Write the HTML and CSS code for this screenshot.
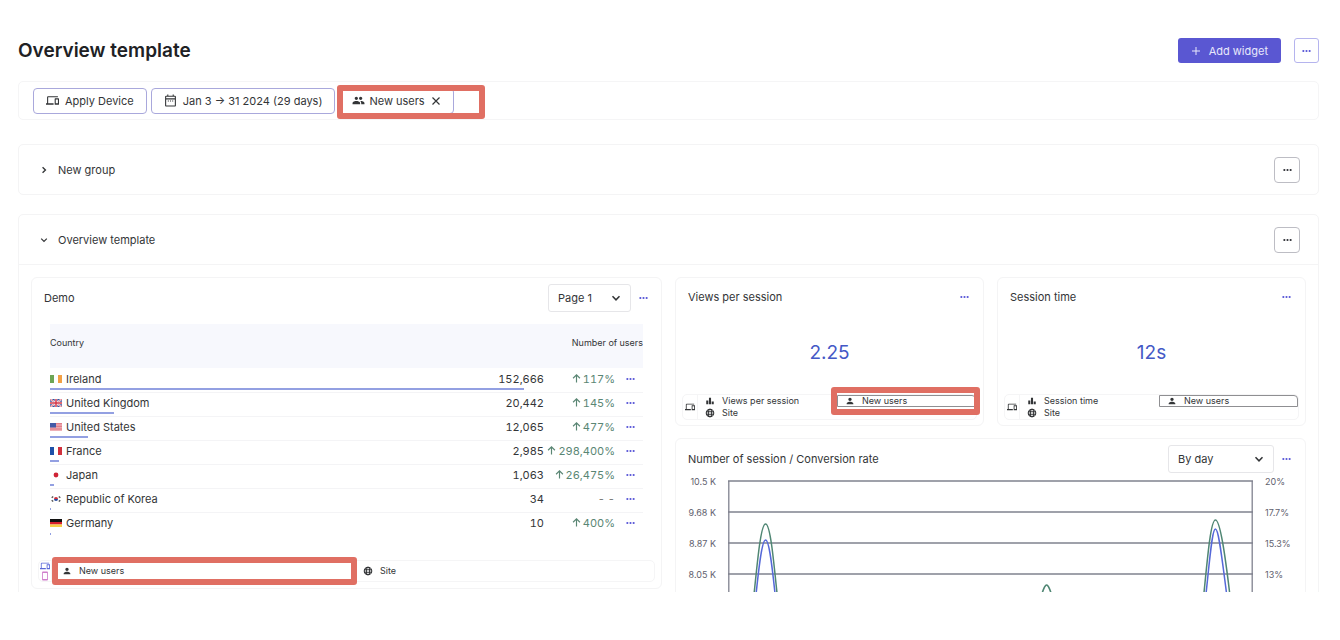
FILE: index.html
```html
<!DOCTYPE html>
<html lang="en">
<head>
<meta charset="utf-8">
<title>Overview template</title>
<link rel="stylesheet" href="styles.css">
</head>
<body>
<svg class="defs" aria-hidden="true">
  <symbol id="dots" viewBox="0 0 10 4"><circle cx="1.5" cy="2" r="1.2"/><circle cx="5" cy="2" r="1.2"/><circle cx="8.5" cy="2" r="1.2"/></symbol>
  <symbol id="device" viewBox="0 0 24 24"><path d="M4 6h18V4H4c-1.100 0-2 .9-2 2v11H0v3h14v-3H4zm19 2h-6c-.55 0-1 .45-1 1v10c0 .55.45 1 1 1h6c.55 0 1-.45 1-1V9c0-.55-.45-1-1-1m-1 9h-4v-7h4z"/></symbol>
  <symbol id="phone" viewBox="0 0 24 24"><path d="M17 1H7a2 2 0 0 0-2 2v18a2 2 0 0 0 2 2h10a2 2 0 0 0 2-2V3a2 2 0 0 0-2-2m0 18H7V5h10z"/></symbol>
  <symbol id="person" viewBox="0 0 24 24"><path d="M12 12c2.200 0 4-1.800 4-4s-1.800-4-4-4-4 1.800-4 4 1.800 4 4 4m0 2c-2.700 0-8 1.300-8 4v2h16v-2c0-2.700-5.300-4-8-4"/></symbol>
  <symbol id="people" viewBox="0 0 24 24"><path d="M16 11c1.660 0 2.990-1.340 2.990-3S17.660 5 16 5s-3 1.340-3 3 1.340 3 3 3m-8 0c1.660 0 2.990-1.340 2.990-3S9.660 5 8 5 5 6.340 5 8s1.340 3 3 3m0 2c-2.330 0-7 1.170-7 3.500V19h14v-2.500C15 14.170 10.330 13 8 13m8 0c-.29 0-.62.02-.97.05C16.190 13.890 17 15.020 17 16.500V19h6v-2.500c0-2.330-4.670-3.500-7-3.500"/></symbol>
  <symbol id="bars" viewBox="0 0 24 24"><path d="M3 11h5v9H3zM9.500 4h5v16h-5zM16 13h5v7h-5z"/></symbol>
  <symbol id="globe" viewBox="0 0 24 24"><g fill="none" stroke="currentColor" stroke-width="2.600"><circle cx="12" cy="12" r="9"/><ellipse cx="12" cy="12" rx="4" ry="9"/><path d="M3 9h18M3 15h18"/></g></symbol>
  <symbol id="calendar" viewBox="0 0 24 24"><path d="M20 3h-2V1h-2v2H8V1H6v2H4a2 2 0 0 0-2 2v16c0 1.100.9 2 2 2h16c1.100 0 2-.9 2-2V5a2 2 0 0 0-2-2m0 18H4V10h16zm0-13H4V5h16zM7 12h2v2H7zm4 0h2v2h-2zm4 0h2v2h-2z"/></symbol>
  <symbol id="down" viewBox="0 0 10 10"><path d="M1.500 3.200 5 6.800l3.500-3.600" fill="none" stroke="currentColor" stroke-width="1.500"/></symbol>
  <symbol id="right" viewBox="0 0 10 10"><path d="M3.200 1.500 6.800 5 3.200 8.500" fill="none" stroke="currentColor" stroke-width="1.700"/></symbol>
  <symbol id="up" viewBox="0 0 10 10"><path d="M5 9.500V1M1.200 4.700 5 1l3.800 3.700" fill="none" stroke="currentColor" stroke-width="1.300"/></symbol>
</svg>

<div class="page">
  <header class="page-head">
    <h1 class="title">Overview template</h1>
    <button class="add" type="button"><svg class="plus" viewBox="0 0 10 10"><path d="M5 1v8M1 5h8" stroke="currentColor" stroke-width="1"/></svg>Add widget</button>
    <button class="square accent" type="button" aria-label="Page options"><svg class="dots"><use href="#dots"/></svg></button>
  </header>

  <div class="filters">
    <button class="filter" type="button"><svg class="icon"><use href="#device"/></svg>Apply Device</button>
    <button class="filter" type="button"><svg class="icon"><use href="#calendar"/></svg>Jan 3 → 31 2024 (29 days)</button>
    <div class="marked">
      <button class="filter users" type="button"><svg class="icon"><use href="#people"/></svg>New users<svg class="close" viewBox="0 0 10 10"><path d="M1.500 1.500l7 7M8.500 1.500l-7 7" stroke="currentColor" stroke-width="1.200"/></svg></button>
      <span class="mark mark-filter"></span>
    </div>
  </div>

  <section class="group">
    <div class="group-head">
      <button class="toggle" type="button"><svg class="chev"><use href="#right"/></svg>New group</button>
      <button class="square" type="button" aria-label="Group options"><svg class="dots"><use href="#dots"/></svg></button>
    </div>
  </section>

  <section class="group">
    <div class="group-head">
      <button class="toggle" type="button"><svg class="chev"><use href="#down"/></svg>Overview template</button>
      <button class="square" type="button" aria-label="Group options"><svg class="dots"><use href="#dots"/></svg></button>
    </div>
    <div class="board">
      <article class="card demo">
        <div class="demo-head">
          <h2 class="card-title">Demo</h2>
          <div class="select-box page-select"><select class="select" aria-label="Page"><option>Page 1</option></select><svg class="select-chev"><use href="#down"/></svg></div>
          <button class="more" type="button" aria-label="Widget options"><svg class="dots"><use href="#dots"/></svg></button>
        </div>
        <table class="table">
          <colgroup><col><col class="col-count"><col class="col-change"><col class="col-more"></colgroup>
          <thead><tr><th>Country</th><th class="num" colspan="3">Number of users</th></tr></thead>
          <tbody>
            <tr><td><span class="country"><svg class="flag" viewBox="0 0 12 8"><path fill="#fff" d="M0 0h12v8H0z"/><path fill="#6da555" d="M0 0h4v8H0z"/><path fill="#f2a045" d="M8 0h4v8H8z"/></svg>Ireland</span><span class="bar" style="width:80%"></span></td><td class="num">152,666</td><td class="change"><svg class="up"><use href="#up"/></svg>117%</td><td class="opt"><button class="more" type="button" aria-label="Ireland options"><svg class="dots"><use href="#dots"/></svg></button></td></tr>
            <tr><td><span class="country"><svg class="flag" viewBox="0 0 12 8"><path fill="#39539c" d="M0 0h12v8H0z"/><path stroke="#fff" stroke-width="1.800" d="M0 0l12 8M12 0L0 8"/><path stroke="#d2384a" stroke-width=".7" d="M0 0l12 8M12 0L0 8"/><path stroke="#fff" stroke-width="2.600" d="M6 0v8M0 4h12"/><path stroke="#d2384a" stroke-width="1.500" d="M6 0v8M0 4h12"/></svg>United Kingdom</span><span class="bar" style="width:10.8%"></span></td><td class="num">20,442</td><td class="change"><svg class="up"><use href="#up"/></svg>145%</td><td class="opt"><button class="more" type="button" aria-label="United Kingdom options"><svg class="dots"><use href="#dots"/></svg></button></td></tr>
            <tr><td><span class="country"><svg class="flag" viewBox="0 0 12 8"><path fill="#f5c9ce" d="M0 0h12v8H0z"/><path stroke="#d9626f" stroke-width=".8" d="M0 .4h12M0 2h12M0 3.600h12M0 5.200h12M0 6.800h12"/><path fill="#4459a6" d="M0 0h6v4.500H0z"/></svg>United States</span><span class="bar" style="width:6.4%"></span></td><td class="num">12,065</td><td class="change"><svg class="up"><use href="#up"/></svg>477%</td><td class="opt"><button class="more" type="button" aria-label="United States options"><svg class="dots"><use href="#dots"/></svg></button></td></tr>
            <tr><td><span class="country"><svg class="flag" viewBox="0 0 12 8"><path fill="#fff" d="M0 0h12v8H0z"/><path fill="#1e50a8" d="M0 0h4v8H0z"/><path fill="#d0303c" d="M8 0h4v8H8z"/></svg>France</span><span class="bar" style="width:1.6%"></span></td><td class="num">2,985</td><td class="change"><svg class="up"><use href="#up"/></svg>298,400%</td><td class="opt"><button class="more" type="button" aria-label="France options"><svg class="dots"><use href="#dots"/></svg></button></td></tr>
            <tr><td><span class="country"><svg class="flag" viewBox="0 0 12 8"><path fill="#fff" d="M0 0h12v8H0z"/><circle cx="6" cy="4" r="2.400" fill="#cf2436"/></svg>Japan</span><span class="bar" style="width:0.6%"></span></td><td class="num">1,063</td><td class="change"><svg class="up"><use href="#up"/></svg>26,475%</td><td class="opt"><button class="more" type="button" aria-label="Japan options"><svg class="dots"><use href="#dots"/></svg></button></td></tr>
            <tr><td><span class="country"><svg class="flag" viewBox="0 0 12 8"><path fill="#fff" d="M0 0h12v8H0z"/><path fill="#d0303c" d="M4 4a2 2 0 0 1 4 0z"/><path fill="#2449a0" d="M4 4a2 2 0 0 0 4 0z"/><path stroke="#555" stroke-width="1.400" d="M1.700 2.800l1.500-1.300M10.300 2.800L8.800 1.500M1.700 5.200l1.500 1.300M10.300 5.200L8.800 6.500"/></svg>Republic of Korea</span><span class="bar" style="width:0.2%"></span></td><td class="num">34</td><td class="change none">- -</td><td class="opt"><button class="more" type="button" aria-label="Republic of Korea options"><svg class="dots"><use href="#dots"/></svg></button></td></tr>
            <tr><td><span class="country"><svg class="flag" viewBox="0 0 12 8"><path fill="#111" d="M0 0h12v3H0z"/><path fill="#d8202c" d="M0 3h12v2.500H0z"/><path fill="#f8cf46" d="M0 5.500h12V8H0z"/></svg>Germany</span><span class="bar" style="width:0.2%"></span></td><td class="num">10</td><td class="change"><svg class="up"><use href="#up"/></svg>400%</td><td class="opt"><button class="more" type="button" aria-label="Germany options"><svg class="dots"><use href="#dots"/></svg></button></td></tr>
          </tbody>
        </table>
        <div class="tags tags-tall">
          <div class="tag-device"><svg class="tag-icon blue"><use href="#device"/></svg><svg class="tag-icon pink"><use href="#phone"/></svg></div>
          <div class="tag-grid">
            <div class="tag marked"><svg class="tag-icon"><use href="#person"/></svg>New users<span class="mark mark-wide"></span></div>
            <div class="tag"><svg class="tag-icon"><use href="#globe"/></svg>Site</div>
          </div>
        </div>
      </article>

      <div class="side">
        <article class="card metric">
          <div class="metric-head"><h2 class="card-title">Views per session</h2><button class="more" type="button" aria-label="Widget options"><svg class="dots"><use href="#dots"/></svg></button></div>
          <p class="value">2.25</p>
          <div class="tags">
            <div class="tag-device"><svg class="tag-icon"><use href="#device"/></svg></div>
            <div class="tag-grid">
              <div class="tag"><svg class="tag-icon"><use href="#bars"/></svg>Views per session</div>
              <div class="tag outlined marked"><svg class="tag-icon"><use href="#person"/></svg>New users<span class="mark mark-tag"></span></div>
              <div class="tag"><svg class="tag-icon"><use href="#globe"/></svg>Site</div>
            </div>
          </div>
        </article>
        <article class="card metric">
          <div class="metric-head"><h2 class="card-title">Session time</h2><button class="more" type="button" aria-label="Widget options"><svg class="dots"><use href="#dots"/></svg></button></div>
          <p class="value">12s</p>
          <div class="tags">
            <div class="tag-device"><svg class="tag-icon"><use href="#device"/></svg></div>
            <div class="tag-grid">
              <div class="tag"><svg class="tag-icon"><use href="#bars"/></svg>Session time</div>
              <div class="tag outlined"><svg class="tag-icon"><use href="#person"/></svg>New users</div>
              <div class="tag"><svg class="tag-icon"><use href="#globe"/></svg>Site</div>
            </div>
          </div>
        </article>
        <article class="card chart-card">
          <div class="chart-head">
            <h2 class="card-title">Number of session / Conversion rate</h2>
            <div class="select-box day-select"><select class="select" aria-label="Interval"><option>By day</option></select><svg class="select-chev"><use href="#down"/></svg></div>
            <button class="more" type="button" aria-label="Widget options"><svg class="dots"><use href="#dots"/></svg></button>
          </div>
          <div class="chart">
            <div class="axis axis-left"><span>10.5 K</span><span>9.68 K</span><span>8.87 K</span><span>8.05 K</span></div>
            <svg class="plot" viewBox="0 0 524 124" preserveAspectRatio="none">
              <g fill="none" stroke="#80828f" stroke-width="1.300">
                <path d="M0 1h524M0 32h524M0 63h524M0 94h524M.8 1v123M523.200 1v123"/>
              </g>
              <g fill="none" stroke-width="1.500">
                <path stroke="#5568d8" d="M27 124C31 84 34 60 37.500 60S44 84 48 124M476 124C481 79 483 49 486.500 49S493 79 499 124"/>
                <path stroke="#4f8673" d="M25 124C30 74 33 44 37.500 44S45 74 50 124M310 124C314 111 316 105 318 105S322 111 326 124M474 124C479 72 482 40 486.500 40S496 72 502 124"/>
              </g>
            </svg>
            <div class="axis axis-right"><span>20%</span><span>17.7%</span><span>15.3%</span><span>13%</span></div>
          </div>
        </article>
      </div>
    </div>
  </section>
</div>
</body>
</html>
```
FILE: styles.css
```css
* { box-sizing: border-box; }

body {
  margin: 0;
  background: #fff;
  color: #333537;
  font: 11px/14px Inter, "Liberation Sans", sans-serif;
}

button, select { font: inherit; color: inherit; }
button { cursor: pointer; }
svg { display: block; fill: currentColor; flex: none; }
.defs { position: absolute; width: 0; height: 0; }

.page {
  height: calc(100vh - 48px);
  overflow: hidden;
  padding: 38px 21px 0 18px;
}

.page-head { display: flex; align-items: center; height: 25px; margin-bottom: 18px; }
.title { flex: 1; margin: 0; padding-top: 1px; font-size: 19px; line-height: 24px; font-weight: 600; color: #202124; }
.add {
  display: flex; align-items: center; gap: 8px;
  height: 25px; margin-right: 13px; padding: 0 13px;
  border: 0; border-radius: 3px; background: #5a57d2; color: #e8e8fb;
}
.plus { width: 10px; height: 10px; }
.square {
  display: flex; align-items: center; justify-content: center;
  width: 26px; height: 26px; padding: 0;
  border: 1px solid #bdbdc4; border-radius: 4px; background: #fff; color: #2c2d33;
}
.square.accent { width: 25px; height: 25px; border-color: #b5b4ee; color: #5553d6; border-radius: 3px; }
.dots { width: 9px; height: 4px; }

.filters {
  display: flex; align-items: center; gap: 4px;
  height: 39px; margin-bottom: 24px; padding: 0 14px;
  border: 1px solid #f5f5f6; border-radius: 5px;
}
.filter {
  display: flex; align-items: center; gap: 6px;
  height: 26px; padding: 0 12px;
  border: 1px solid #a9a8dc; border-radius: 4px; background: #fff;
}
.filter.users { gap: 4px; }
.icon { width: 13px; height: 13px; }
.close { width: 10px; height: 10px; margin-left: 2px; }
.marked { position: relative; }
.mark { position: absolute; border: 6px solid #e06f63; border-radius: 3px; z-index: 1; }
.mark-filter { left: -2px; right: -31px; top: -3px; bottom: -5px; }
.mark-tag { left: -7px; right: -5px; top: -9px; bottom: -9px; }
.mark-wide { left: 0; right: -4px; top: -4px; bottom: -4px; }

.group { margin-bottom: 19px; border: 1px solid #f4f4f5; border-radius: 5px; }
.group-head { display: flex; align-items: center; justify-content: space-between; height: 49px; padding: 0 18px 0 21px; }
.toggle { display: flex; align-items: center; gap: 10px; padding: 0; border: 0; background: none; }
.chev { width: 8px; height: 8px; }

.board {
  display: grid; grid-template-columns: 1fr 1fr; gap: 13px; align-items: start;
  padding: 12px; border-top: 1px solid #f4f4f5;
}
.side { display: grid; grid-template-columns: 1fr 1fr; gap: 12px 13px; }
.card { min-width: 0; border: 1px solid #f4f4f5; border-radius: 6px; }
.card-title { margin: 0; font-size: 11px; line-height: 14px; font-weight: 400; }
.more { display: flex; align-items: center; padding: 0; border: 0; background: none; color: #5553d6; height: 14px; }

.select-box { position: relative; }
.select {
  appearance: none; display: block; width: 100%; height: 28px; padding: 0 9px;
  border: 1px solid #e6e6e9; border-radius: 3px; background: #fff;
}
.select-chev { position: absolute; right: 10px; top: 9px; width: 10px; height: 10px; pointer-events: none; }
.page-select { width: 83px; margin-left: auto; margin-right: 8px; }
.day-select { width: 106px; margin-left: auto; margin-right: 8px; }

.demo { padding: 6px 6px 6px; }
.demo-head { display: flex; align-items: center; padding: 0 7px 0 6px; margin-bottom: 12px; }
.table { width: calc(100% - 24px); margin: 0 12px; border-collapse: collapse; table-layout: fixed; font-variant-numeric: tabular-nums; }
.col-count { width: 64px; }
.col-change { width: 71px; }
.col-more { width: 28px; }
.table th { height: 44px; padding: 0 0 6px; background: #f7f8fd; font-size: 9px; font-weight: 400; text-align: left; }
.table td { height: 24px; padding: 0 0 2px; line-height: 14px; }
.table tbody tr { position: relative; border-bottom: 1px solid #f4f4f6; }
.table tbody tr:last-child { border-bottom: 0; }
.table .num { text-align: right; }
.country { display: flex; align-items: center; gap: 4px; }
.flag { width: 12px; height: 8px; }
.bar { position: absolute; left: 0; bottom: 1px; height: 2px; background: #93a0e2; }
.table .change { text-align: right; white-space: nowrap; color: #5a8674; }
.up { display: inline-block; width: 9px; height: 9px; margin-right: 2px; }
.table .none { color: #777; }
.opt .more { margin-left: 11px; }

.tags { display: flex; border: 1px solid #f5f5f6; border-radius: 5px; font-size: 9px; line-height: 12px; }
.tags-tall { margin-top: 24px; }
.tag-device { display: flex; flex-direction: column; align-items: center; justify-content: center; width: 15px; border-right: 1px solid #f5f5f6; }
.tag-icon { width: 10px; height: 10px; }
.tags-tall .tag-device { width: 13px; }
.blue { color: #5b68d8; }
.pink { color: #cf7fcb; }
.tag-grid { flex: 1; display: grid; grid-template-columns: 1fr 1fr; }
.tag { display: flex; align-items: center; gap: 7px; height: 12px; padding-left: 7px; }
.tags-tall .tag { height: 20px; padding-left: 10px; }
.outlined { border: 1px solid #8f8f92; border-top-right-radius: 4px; }

.metric { display: flex; flex-direction: column; height: 149px; padding: 12px 6px 5px; }
.metric-head { display: flex; justify-content: space-between; padding: 0 7px 0 6px; }
.metric-head .more { margin-right: 1px; }
.value { margin: auto 0; padding-top: 8px; text-align: center; font-size: 19px; line-height: 24px; color: #4458c6; }

.chart-card { grid-column: 1 / -1; }
.chart-head { display: flex; align-items: center; padding: 6px 14px 0 12px; }
.chart { display: flex; padding: 7px 0 0 12px; }
.axis { display: flex; flex-direction: column; font-size: 9px; line-height: 31px; color: #5f616e; margin-top: -14px; }
.axis-left { width: 28px; margin-right: 12px; text-align: right; white-space: nowrap; }
.axis-right { width: 40px; margin-left: 12px; }
.plot { flex: 1; min-width: 0; height: 124px; }
```
